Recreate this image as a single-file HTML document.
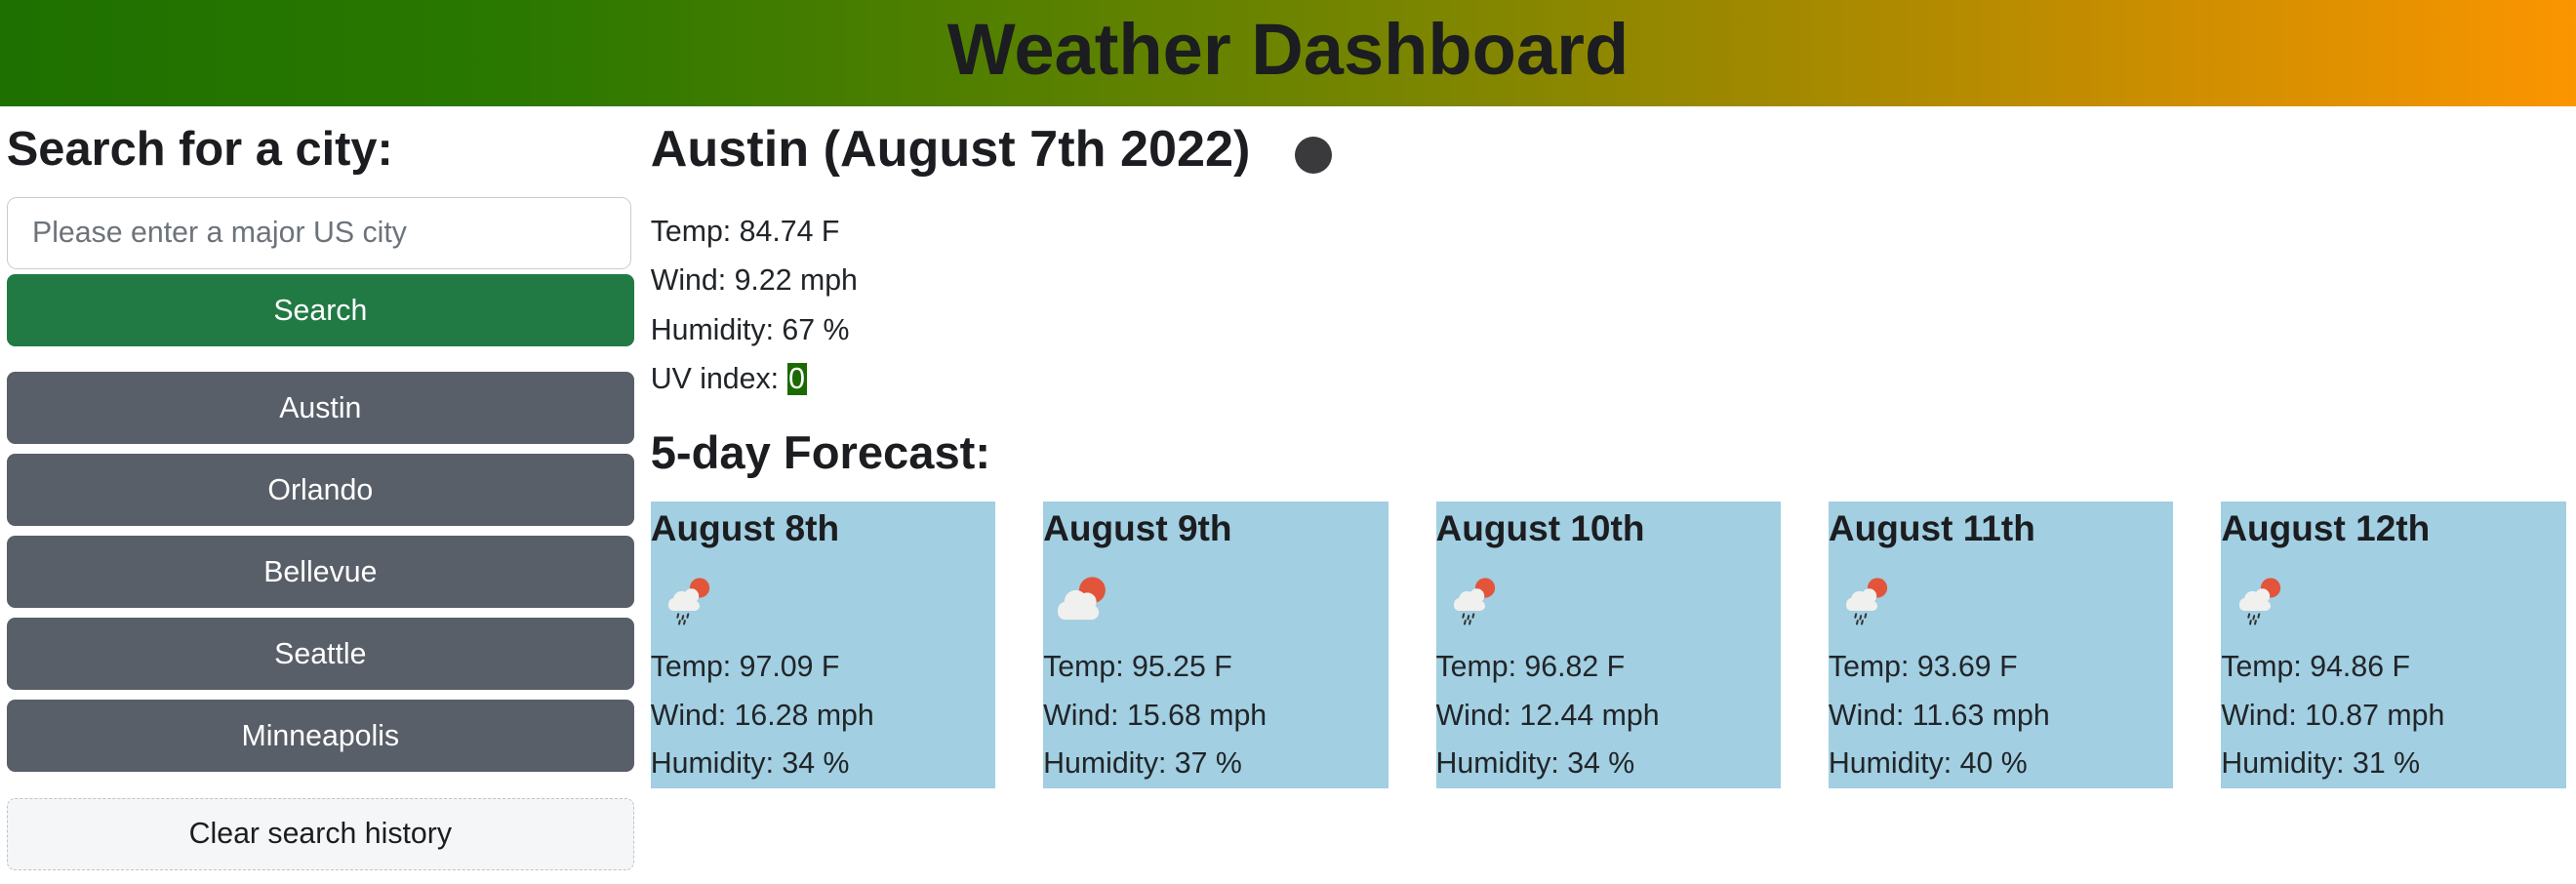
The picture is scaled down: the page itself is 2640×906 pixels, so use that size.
<!DOCTYPE html>
<html><head><meta charset="utf-8"><style>
html,body{margin:0;padding:0;background:#fff;}
body{zoom:1.68367;width:1568px;height:538px;overflow:hidden;font-family:"Liberation Sans",Arial,sans-serif;color:#212529;position:relative;}
.hdr{position:absolute;left:0;top:0;width:1568px;height:65px;background:linear-gradient(90deg,#1e7000 0%,#2a7800 20%,#6d8400 50%,#c08c00 80%,#fb9500 100%);text-align:center;}
.hdr h1{margin:0;font-weight:bold;font-size:44px;line-height:60px;color:#1c1d20;}
.abs{position:absolute;}
h2{margin:0;font-weight:bold;color:#1c1d20;}
.inp{left:4px;top:120px;width:380px;height:44px;border:1px solid #c7ccd3;border-radius:6px;box-sizing:border-box;font-size:18px;color:#6c737a;padding-left:15px;line-height:43px;}
.btn{left:4px;width:382px;height:44px;border-radius:5px;color:#fff;font-size:18px;text-align:center;line-height:45px;}
.g{background:#217a44;}
.s{background:#595f68;}
.clr{left:4px;top:486px;width:382px;height:44px;box-sizing:border-box;border:1px dashed #c0c4c8;border-radius:5px;background:#f5f6f7;color:#1c1d20;font-size:18px;text-align:center;line-height:43px;}
.ln{font-size:18px;left:396px;}
.card{top:305px;width:210px;height:175px;background:#a2cfe1;}
.card .t{position:absolute;left:0;top:4px;font-size:22px;font-weight:bold;color:#1c1d20;}
.card .l{position:absolute;left:0;font-size:18px;}
</style></head><body>
<div class="hdr"><h1>Weather Dashboard</h1></div>
<h2 class="abs" style="left:4px;top:74px;font-size:29px;">Search for a city:</h2>
<div class="abs inp">Please enter a major US city</div>
<div class="abs btn g" style="top:167px">Search</div>
<div class="abs btn s" style="top:226px">Austin</div>
<div class="abs btn s" style="top:276px">Orlando</div>
<div class="abs btn s" style="top:326px">Bellevue</div>
<div class="abs btn s" style="top:376px">Seattle</div>
<div class="abs btn s" style="top:426px">Minneapolis</div>
<div class="abs clr">Clear search history</div>

<h2 class="abs" style="left:396px;top:73px;font-size:31px;">Austin (August 7th 2022)</h2>
<div class="abs" style="left:788px;top:83px;width:23px;height:23px;border-radius:50%;background:#3a3a3c;"></div>
<div class="abs ln" style="top:131px">Temp: 84.74 F</div>
<div class="abs ln" style="top:161px">Wind: 9.22 mph</div>
<div class="abs ln" style="top:191px">Humidity: 67 %</div>
<div class="abs ln" style="top:221px">UV index: <span style="background:#1b6a00;color:#fff;padding:0 1px;">0</span></div>
<h2 class="abs" style="left:396px;top:259px;font-size:28px;">5-day Forecast:</h2>

<svg width="0" height="0" style="position:absolute">
<defs>
<g id="rain"><circle cx="22" cy="8" r="6" fill="#e2553a"/><g fill="#f0f0ef"><circle cx="11" cy="15" r="5"/><circle cx="17" cy="13" r="4.5"/><circle cx="7" cy="18" r="4"/><rect x="3" y="16" width="19" height="6" rx="3"/></g><g stroke="#333" stroke-width="1.2" stroke-linecap="round"><line x1="9" y1="24" x2="8.5" y2="26"/><line x1="12" y1="25" x2="11.5" y2="27"/><line x1="15" y1="24" x2="14.5" y2="26"/><line x1="10" y1="28" x2="9.5" y2="30"/><line x1="13" y1="28" x2="12.5" y2="30"/></g></g>
<g id="cloud"><circle cx="24" cy="10" r="8" fill="#e2553a"/><g fill="#f0f0ef"><circle cx="14" cy="17" r="7"/><circle cx="21" cy="17" r="5.5"/><circle cx="8" cy="22" r="5"/><rect x="3" y="19" width="25" height="9" rx="4.5"/></g></g>
</defs></svg>

<div class="abs card" style="left:396px"><div class="t">August 8th</div><svg style="position:absolute;left:8px;top:45px" width="32" height="34"><use href="#rain"/></svg><div class="l" style="top:91px">Temp: 97.09 F</div><div class="l" style="top:121px">Wind: 16.28 mph</div><div class="l" style="top:150px">Humidity: 34 %</div></div>
<div class="abs card" style="left:635px"><div class="t">August 9th</div><svg style="position:absolute;left:6px;top:44px" width="36" height="36"><use href="#cloud"/></svg><div class="l" style="top:91px">Temp: 95.25 F</div><div class="l" style="top:121px">Wind: 15.68 mph</div><div class="l" style="top:150px">Humidity: 37 %</div></div>
<div class="abs card" style="left:874px"><div class="t">August 10th</div><svg style="position:absolute;left:8px;top:45px" width="32" height="34"><use href="#rain"/></svg><div class="l" style="top:91px">Temp: 96.82 F</div><div class="l" style="top:121px">Wind: 12.44 mph</div><div class="l" style="top:150px">Humidity: 34 %</div></div>
<div class="abs card" style="left:1113px"><div class="t">August 11th</div><svg style="position:absolute;left:8px;top:45px" width="32" height="34"><use href="#rain"/></svg><div class="l" style="top:91px">Temp: 93.69 F</div><div class="l" style="top:121px">Wind: 11.63 mph</div><div class="l" style="top:150px">Humidity: 40 %</div></div>
<div class="abs card" style="left:1352px"><div class="t">August 12th</div><svg style="position:absolute;left:8px;top:45px" width="32" height="34"><use href="#rain"/></svg><div class="l" style="top:91px">Temp: 94.86 F</div><div class="l" style="top:121px">Wind: 10.87 mph</div><div class="l" style="top:150px">Humidity: 31 %</div></div>
</body></html>
